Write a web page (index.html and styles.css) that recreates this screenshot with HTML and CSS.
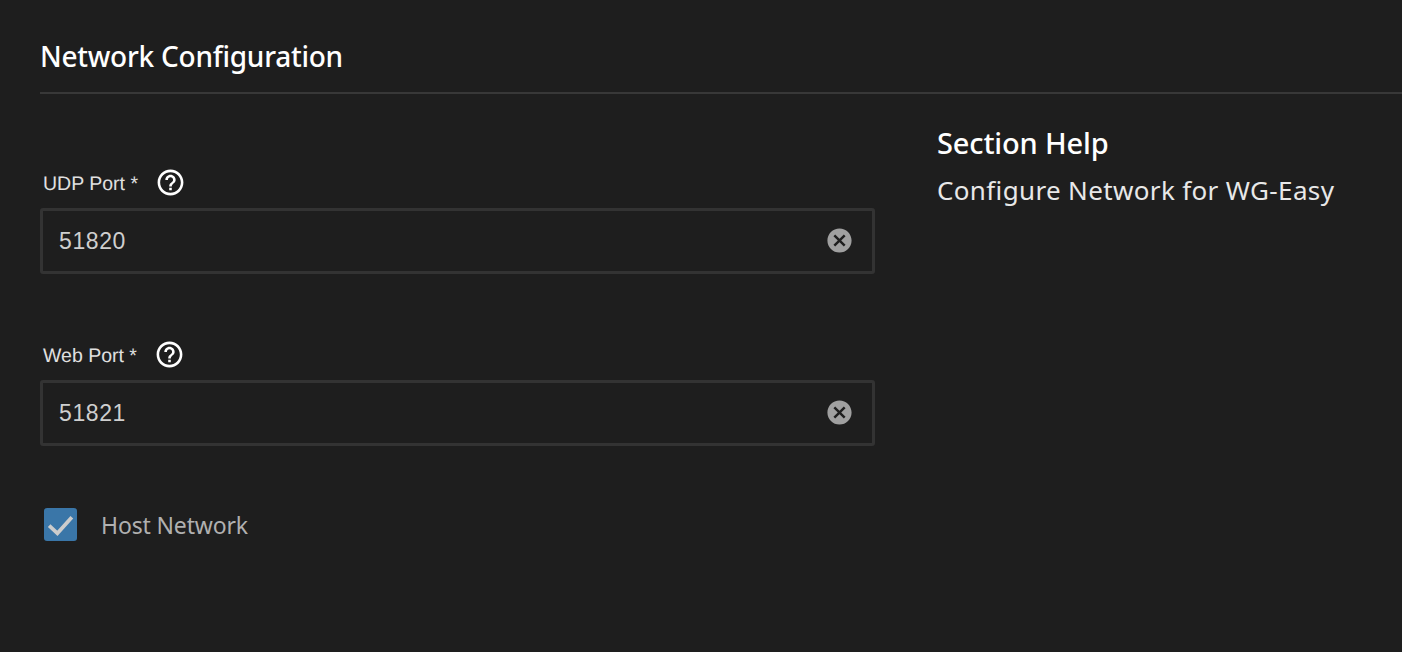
FILE: index.html
```html
<!DOCTYPE html>
<html lang="en">
<head>
<meta charset="utf-8">
<title>Network Configuration</title>
<link rel="stylesheet" href="styles.css">
</head>
<body>
<main class="page">
  <h1 class="title">Network Configuration</h1>
  <div class="columns">
    <section class="form">
      <div class="field">
        <div class="label-row">
          <label class="label">UDP Port<span class="req"> *</span></label>
          <svg class="help" viewBox="0 0 24 24" aria-hidden="true"><path d="M11 18h2v-2h-2v2zm1-16C6.48 2 2 6.48 2 12s4.48 10 10 10 10-4.48 10-10S17.52 2 12 2zm0 18c-4.41 0-8-3.59-8-8s3.59-8 8-8 8 3.59 8 8-3.59 8-8 8zm0-14c-2.21 0-4 1.79-4 4h2c0-1.1.9-2 2-2s2 .9 2 2c0 2-3 1.75-3 5h2c0-2.25 3-2.5 3-5 0-2.21-1.79-4-4-4z"/></svg>
        </div>
        <div class="input">
          <span class="value">51820</span>
          <svg class="clear" viewBox="0 0 24 24" aria-hidden="true"><path d="M12 2C6.47 2 2 6.47 2 12s4.47 10 10 10 10-4.47 10-10S17.53 2 12 2zm5 13.59L15.59 17 12 13.41 8.41 17 7 15.59 10.59 12 7 8.41 8.41 7 12 10.59 15.59 7 17 8.41 13.41 12 17 15.59z"/></svg>
        </div>
      </div>
      <div class="field">
        <div class="label-row">
          <label class="label">Web Port<span class="req"> *</span></label>
          <svg class="help" viewBox="0 0 24 24" aria-hidden="true"><path d="M11 18h2v-2h-2v2zm1-16C6.48 2 2 6.48 2 12s4.48 10 10 10 10-4.48 10-10S17.52 2 12 2zm0 18c-4.41 0-8-3.59-8-8s3.59-8 8-8 8 3.59 8 8-3.59 8-8 8zm0-14c-2.21 0-4 1.79-4 4h2c0-1.1.9-2 2-2s2 .9 2 2c0 2-3 1.75-3 5h2c0-2.25 3-2.5 3-5 0-2.21-1.79-4-4-4z"/></svg>
        </div>
        <div class="input">
          <span class="value">51821</span>
          <svg class="clear" viewBox="0 0 24 24" aria-hidden="true"><path d="M12 2C6.47 2 2 6.47 2 12s4.47 10 10 10 10-4.47 10-10S17.53 2 12 2zm5 13.59L15.59 17 12 13.41 8.41 17 7 15.59 10.59 12 7 8.41 8.41 7 12 10.59 15.59 7 17 8.41 13.41 12 17 15.59z"/></svg>
        </div>
      </div>
      <div class="check-row">
        <span class="checkbox"><svg viewBox="0 0 32 32" aria-hidden="true"><path d="M5 17l8 7.5L27 9" /></svg></span>
        <span class="check-label">Host Network</span>
      </div>
    </section>
    <aside class="help-panel">
      <h2 class="help-title">Section Help</h2>
      <p class="help-text">Configure Network for WG-Easy</p>
    </aside>
  </div>
</main>
</body>
</html>
```
FILE: styles.css
```css
* { box-sizing: border-box; }
html, body { margin: 0; height: 100%; }
body {
  background: #1e1e1e;
  color: #fff;
  overflow: hidden;
}
.page { padding: 0 0 0 40px; }
.title {
  margin: 0;
  height: 94px;
  padding: 37px 0 0 0;
  border-bottom: 2px solid #383838;
  font: 500 28px/38px "Noto Sans", sans-serif;
  letter-spacing: -0.25px;
}
.columns { display: flex; }
.form { width: 835px; padding-top: 72px; }
.field + .field { margin-top: 64px; }
.label-row {
  display: flex;
  align-items: center;
  height: 32px;
  padding-left: 3px;
  margin-bottom: 10px;
}
.label {
  padding-top: 3px;
  font: 400 19.5px/32px "Liberation Sans", sans-serif;
  text-rendering: geometricPrecision;
  color: #e0e0e0;
}
.help { width: 31px; height: 31px; fill: #fff; margin-left: 17px; }
.input {
  display: flex;
  align-items: center;
  justify-content: space-between;
  height: 66px;
  padding: 0 18px 0 16px;
  border: 3px solid #333;
  border-radius: 3px;
}
.value {
  font: 400 23px/1 "Liberation Sans", sans-serif;
  color: #cfcfcf;
  letter-spacing: 0.6px;
}
.clear { width: 29px; height: 29px; fill: #a0a0a0; position: relative; top: -1px; }
.check-row { display: flex; align-items: center; padding: 62px 0 0 4px; }
.checkbox {
  display: flex;
  width: 33px;
  height: 33px;
  border-radius: 3px;
  background: #3a76a8;
}
.checkbox svg { width: 33px; height: 33px; fill: none; stroke: #cccccc; stroke-width: 3.6; }
.check-label {
  margin-left: 24px;
  font: 400 23px/32px "Noto Sans", sans-serif;
  letter-spacing: -0.15px;
  color: #b0b0b0;
}
.help-panel { padding: 30px 0 0 62px; }
.help-title {
  margin: 0;
  font: 500 29px/38px "Noto Sans", sans-serif;
  letter-spacing: -0.15px;
}
.help-text {
  margin: 9px 0 0;
  font: 400 26px/38px "Noto Sans", sans-serif;
  letter-spacing: 0.35px;
  color: #e8e8e8;
}
```
